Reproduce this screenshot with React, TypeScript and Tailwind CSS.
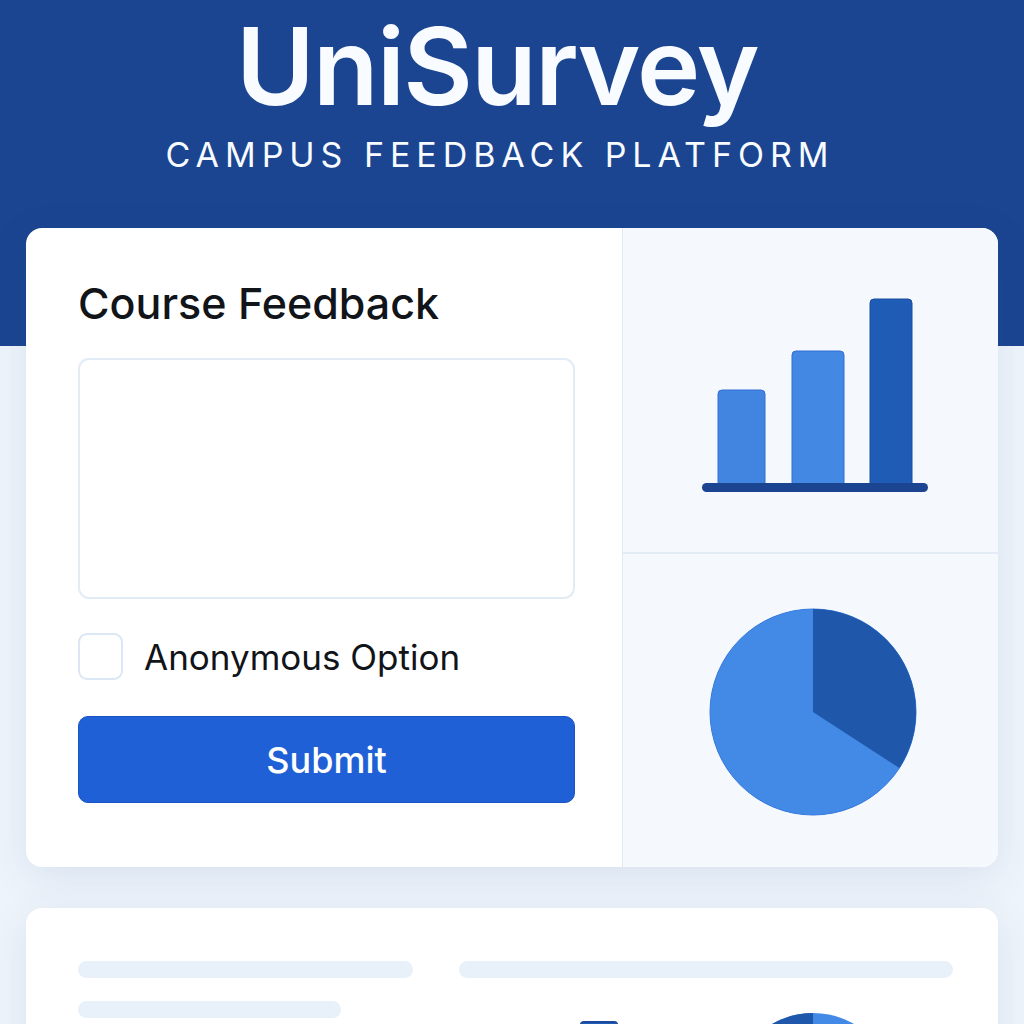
import React from "react";

function BarChart() {
    return (
        <svg width="230" height="200" viewBox="0 0 230 200">
            <rect x="19" y="94" width="47" height="100" rx="4" fill="#4285e0" stroke="#2f6fd6" strokeWidth="1" />
            <rect x="93" y="55" width="52" height="139" rx="4" fill="#4388e3" stroke="#2f6fd6" strokeWidth="1" />
            <rect x="171" y="3" width="42" height="191" rx="4" fill="#1f5cb6" stroke="#1a4c9e" strokeWidth="1" />
            <rect x="3" y="187" width="226" height="9" rx="4.5" fill="#1b4590" />
        </svg>
    );
}

function PieChart() {
    // dark slice from 12 o'clock to about 123 degrees clockwise
    const r = 103;
    const a = (123 * Math.PI) / 180;
    const x = 105 + r * Math.sin(a);
    const y = 105 - r * Math.cos(a);
    return (
        <svg width="210" height="210" viewBox="0 0 210 210">
            <circle cx="105" cy="105" r={r} fill="#438ae6" stroke="#3478dd" strokeWidth="1" />
            <path d={`M105 105 L105 2 A${r} ${r} 0 0 1 ${x} ${y} Z`} fill="#1f58aa" />
        </svg>
    );
}

function SmallCharts() {
    return (
        <div className="flex items-start mt-[35px]">
            <div className="ml-[121px] mt-[8px] w-[38px] h-[60px] rounded-t-[4px] bg-[#1f5cb6] border-t-2 border-[#1b4a9c]"></div>
            <svg className="ml-[113px]" width="164" height="164" viewBox="0 0 164 164">
                <circle cx="82" cy="82" r="82" fill="#438ae6" />
                <path d="M82 82 L82 0 A82 82 0 0 0 10 43 Z" fill="#1f58aa" />
            </svg>
        </div>
    );
}

export default function App() {
    return (
        <div className="min-h-screen bg-[linear-gradient(to_bottom,#1b4590_0px,#1b4590_346px,#eef4fb_346px,#eef4fb_100%)] font-['Inter','Noto_Sans',sans-serif] overflow-hidden">
            <header className="flex flex-col items-center pt-[4px] pr-[30px] text-[#f8fbff]">
                <h1 className="text-[107px] font-semibold leading-[124px] tracking-[-0.015em]">UniSurvey</h1>
                <p className="mt-[7px] text-[34px] leading-[40px] tracking-[0.175em] pl-[0.175em]">CAMPUS FEEDBACK PLATFORM</p>
            </header>

            <main className="px-[26px] mt-[53px] flex flex-col gap-[41px]">
                <section className="flex h-[639px] bg-white rounded-[16px] overflow-hidden shadow-[0_10px_40px_rgba(30,70,140,0.10)]">
                    <div className="w-[596px] pl-[52px] pr-[47px] pt-[49px] flex flex-col">
                        <h2 className="text-[43px] font-medium leading-[52px] text-[#111418]">Course Feedback</h2>
                        <textarea className="mt-[29px] h-[241px] w-full resize-none rounded-[11px] border-2 border-[#e2ecf7] bg-white outline-none"></textarea>
                        <label className="mt-[34px] flex items-center gap-[21px]">
                            <span className="w-[45px] h-[47px] rounded-[9px] border-2 border-[#dbe7f4] bg-white"></span>
                            <span className="text-[35px] leading-[40px] text-[#111418]">Anonymous Option</span>
                        </label>
                        <button className="mt-[36px] h-[87px] w-full rounded-[10px] bg-[#2060d6] border border-[#1b52c4] text-white text-[36px] font-medium">Submit</button>
                    </div>
                    <div className="flex-1 flex flex-col bg-[#f5f9fd] border-l border-[#e0eaf4]">
                        <div className="h-[326px] flex items-start justify-center pt-[68px] pl-[6px] border-b-2 border-[#e3ecf6]">
                            <BarChart />
                        </div>
                        <div className="flex-1 flex items-start justify-center pt-[53px] pl-[4px]">
                            <PieChart />
                        </div>
                    </div>
                </section>

                <section className="h-[320px] bg-white rounded-[16px] shadow-[0_10px_40px_rgba(30,70,140,0.10)] px-[52px] pt-[53px] grid grid-cols-[335px_1fr] gap-x-[46px] content-start">
                    <div className="flex flex-col gap-[23px]">
                        <div className="h-[17px] rounded-full bg-[#e8f0f9]"></div>
                        <div className="h-[17px] w-[263px] rounded-full bg-[#e8f0f9]"></div>
                    </div>
                    <div className="flex flex-col">
                        <div className="h-[17px] mr-[-7px] rounded-full bg-[#e8f0f9]"></div>
                        <SmallCharts />
                    </div>
                </section>
            </main>
        </div>
    );
}
